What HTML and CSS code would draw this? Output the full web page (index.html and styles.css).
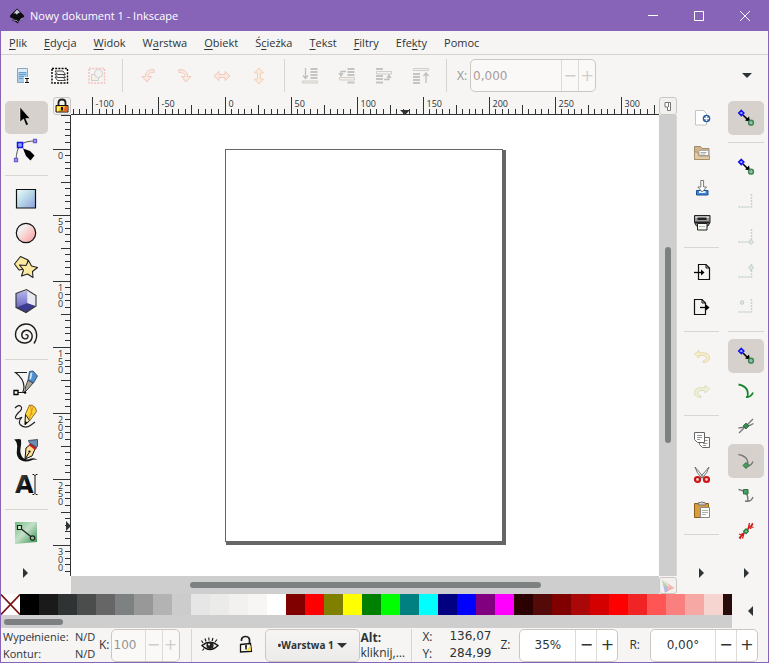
FILE: index.html
```html
<!DOCTYPE html>
<html lang="pl">
<head>
<meta charset="utf-8">
<title>Nowy dokument 1 - Inkscape</title>
<link rel="stylesheet" href="styles.css">
</head>
<body>
<svg class="defs" aria-hidden="true">
  <defs>
    <linearGradient id="gBlue" x1="0" y1="0" x2="1" y2="1"><stop offset="0" stop-color="#f4fafb"/><stop offset=".45" stop-color="#b9dbe8"/><stop offset="1" stop-color="#8f9ee0"/></linearGradient>
    <linearGradient id="gPink" x1="0" y1="0" x2="1" y2="1"><stop offset=".3" stop-color="#f0efed"/><stop offset=".5" stop-color="#fbd3d3"/><stop offset="1" stop-color="#f59a9a"/></linearGradient>
    <linearGradient id="gGreen" x1="0" y1="0" x2="1" y2="1"><stop offset="0" stop-color="#6fbf84"/><stop offset=".45" stop-color="#c4e0c8"/><stop offset="1" stop-color="#2f8f4a"/></linearGradient>
    <linearGradient id="gCube" x1="0" y1="0" x2="0" y2="1"><stop offset="0" stop-color="#b5b5ec"/><stop offset="1" stop-color="#6a6ac2"/></linearGradient>
    <linearGradient id="gInk" x1="0" y1="0" x2="1" y2="1"><stop offset="0" stop-color="#777"/><stop offset=".5" stop-color="#111"/><stop offset="1" stop-color="#000"/></linearGradient>
    <symbol id="snapNodes" viewBox="0 0 24 24">
      <path d="M9 9l5 5" stroke="#000" stroke-width="1.6"/><path d="M16 15.500l-5-1 4-4z" fill="#000"/>
      <path d="M7.300 4.500L9.800 7 7.300 9.500 4.800 7z" fill="#aab4ff" stroke="#1212f0" stroke-width="1.600"/>
      <circle cx="17" cy="16.700" r="2.400" fill="#9ab6d0" stroke="#3a8a44" stroke-width="1.500"/>
    </symbol>
  </defs>
</svg>
<div class="window">
  <header class="titlebar">
    <svg class="logo" viewBox="0 0 16 16"><path d="M8 0.500L15 7.500Q16 9 14 9.500L11.500 10.500 13 12 10 12.500 9 15.500 6 13.500 3 12.500 5 11 1.500 9.500Q0 8.500 1.500 7z" fill="#0c0c10"/><path d="M8 1.500l3 3-2 .8-1 1.400-1.500-1.500-2 .5z" fill="#c9cdd8"/><path d="M4 12l4 .5 1 1.500M11 11.800l3-.8" stroke="#8d93a2" fill="none"/></svg>
    <span class="title">Nowy dokument 1 - Inkscape</span>
    <button class="wbtn" aria-label="Minimalizuj"><svg viewBox="0 0 12 12"><path d="M1 5.500h10"/></svg></button>
    <button class="wbtn" aria-label="Maksymalizuj"><svg viewBox="0 0 12 12"><path d="M1.500 1.500h9v9h-9z"/></svg></button>
    <button class="wbtn" aria-label="Zamknij"><svg viewBox="0 0 12 12"><path d="M1 1l10 10M11 1L1 11"/></svg></button>
  </header>
  <nav class="menubar">
    <button><u>P</u>lik</button><button><u>E</u>dycja</button><button><u>W</u>idok</button><button>W<u>a</u>rstwa</button><button><u>O</u>biekt</button><button>Ś<u>c</u>ieżka</button><button><u>T</u>ekst</button><button><u>F</u>iltry</button><button>Efe<u>k</u>ty</button><button>Pomoc</button>
  </nav>
  <div class="toolbar">
    <button class="tb" aria-label="Zaznacz wszystko"><svg viewBox="0 0 24 24"><path d="M6.500 4.500h10v14h-10z" fill="#a9cdea" stroke="#8fa6b8"/><path d="M7 5h9v3H7z" fill="#d9ecfa"/><path d="M8 8.500h7M8 10.500h7M8 12.500h5M8 14.500h4" stroke="#6a9bc5"/><path d="M13 13h6v7h-6z" fill="#fff"/><path d="M14 14.500h4M14 18.500h4M16 14.500v4" stroke="#111"/></svg></button>
    <button class="tb" aria-label="Zaznacz na warstwach"><svg viewBox="0 0 24 24"><path d="M4 4.500h15.500v14.500H4z" fill="#fdfdfd" stroke="#000" stroke-width="1.400" stroke-dasharray="2 1.200"/><g fill="#f3f3f3" stroke="#333" stroke-width=".9"><path d="M7 13h8l2.500 3.500H9.500z"/><path d="M7 10h8l2.500 3.500H9.500z"/><path d="M7 7h8l2.500 3.500H9.500z"/></g></svg></button>
    <button class="tb off" aria-label="Odznacz"><svg viewBox="0 0 24 24"><path d="M4 4.500h15.500v14.500H4z" fill="none" stroke="#f0483c" stroke-width="1.400" stroke-dasharray="2 1.200"/><path d="M6.500 10.500h7v6h-7z" fill="#f8e9c0" stroke="#777"/><circle cx="13.500" cy="9.500" r="4" fill="#eee" stroke="#777"/></svg></button>
    <i class="vsep"></i>
    <button class="tb off orange red" aria-label="Obróć w lewo"><svg viewBox="0 0 24 24"><path d="M18 5.500C12 5.500 9.500 8 9.500 12.500H6l5 5.500 4.500-5.500H12C12 9.500 14 8.500 18 8.500z"/></svg></button>
    <button class="tb off orange red" aria-label="Obróć w prawo"><svg viewBox="0 0 24 24"><path d="M6 5.500c6 0 8.500 2.500 8.500 7H18l-5 5.500-4.500-5.500H12C12 9.500 10 8.500 6 8.500z"/></svg></button>
    <button class="tb off orange red" aria-label="Odbij poziomo"><svg viewBox="0 0 24 24"><path d="M4 12l5-4.500v3h6v-3l5 4.500-5 4.500v-3H9v3z"/></svg></button>
    <button class="tb off orange" aria-label="Odbij pionowo"><svg viewBox="0 0 24 24"><path d="M12 4l4.500 5h-3v6h3L12 20l-4.500-5h3V9h-3z"/></svg></button>
    <i class="vsep"></i>
    <button class="tb off" aria-label="Na spód"><svg viewBox="0 0 24 24"><path d="M12.500 5h7M12.500 8h7M12.500 11h7M12.500 14h7" stroke="#555" stroke-width="2"/><path d="M4.500 17h15v2h-15z" fill="#f6e8c0" stroke="#777"/><path d="M7.500 4v10M5 11.500l2.500 3 2.500-3" fill="none" stroke="#444" stroke-width="1.300"/></svg></button>
    <button class="tb off" aria-label="Niżej"><svg viewBox="0 0 24 24"><path d="M12.500 5h7M12.500 8h7M12.500 11h7M12.500 18.500h7" stroke="#555" stroke-width="2"/><path d="M4.500 13.500h15v2.500h-15z" fill="#f6e8c0" stroke="#777"/><path d="M11 7.500H6V11M4 9l2 3 2-3" fill="none" stroke="#444" stroke-width="1.300"/></svg></button>
    <button class="tb off" aria-label="Wyżej"><svg viewBox="0 0 24 24"><path d="M4 5h7M4 12h7M4 15h7M4 18.500h7" stroke="#555" stroke-width="2"/><path d="M4.500 7.500h15V10h-15z" fill="#eee" stroke="#777"/><path d="M12 15.500h5V12M15 14l2-3 2 3" fill="none" stroke="#444" stroke-width="1.300"/></svg></button>
    <button class="tb off" aria-label="Na wierzch"><svg viewBox="0 0 24 24"><path d="M4 10h7M4 13h7M4 16h7M4 19h7" stroke="#555" stroke-width="2"/><path d="M4.500 4.500h15v2h-15z" fill="#eee" stroke="#777"/><path d="M17 19V9M14.500 12L17 9l2.500 3" fill="none" stroke="#444" stroke-width="1.300"/></svg></button>
    <i class="vsep"></i>
    <label class="lbl dim" for="posx">X:</label>
    <div class="spin small off-spin wide"><input id="posx" value="0,000" disabled><button disabled aria-label="Mniej">−</button><button disabled aria-label="Więcej">+</button></div>
    <button class="more" aria-label="Więcej opcji"><i class="tri down"></i></button>
  </div>
  <main class="work">
    <aside class="toolbox">
      <button class="on" aria-label="Wskaźnik"><svg viewBox="0 0 26 26"><path d="M7 3v15l3.500-3L13 21.500l2.500-1-2.800-6H17z" fill="#000" stroke="#fff" stroke-width=".5"/></svg></button>
      <button aria-label="Edycja węzłów"><svg viewBox="0 0 26 26"><path d="M22 3Q12 3 7 7 3.500 12 3 22" fill="none" stroke="#555"/><path d="M1.500 20.500h3v3h-3zM20.500 1.500h3v3h-3z" fill="#b9b9ff" stroke="#6b5bd0" stroke-width="1.300"/><path d="M4.500 4.500h5v5h-5z" fill="#8fa0f8" stroke="#1616e6" stroke-width="1.500"/><path d="M10 10.500l7 2.500 4.500 4.500-4 5-4.500-4.500z" fill="#000"/></svg></button>
      <i class="hsep"></i>
      <button aria-label="Prostokąt"><svg viewBox="0 0 26 26"><path d="M3.500 3.500h19v18.500h-19z" fill="url(#gBlue)" stroke="#111" stroke-width="1.200"/></svg></button>
      <button aria-label="Elipsa"><svg viewBox="0 0 26 26"><circle cx="13" cy="13" r="9.700" fill="url(#gPink)" stroke="#111" stroke-width="1.200"/></svg></button>
      <button aria-label="Gwiazda"><svg viewBox="0 0 26 26"><g fill="#fbe9a0" stroke="#222" stroke-width="1.100" stroke-linejoin="round"><path d="M7.500 2.500L15 6l-1.500 8.500-7.500 1.500-4.500-6z"/><path d="M15.500 6.500L18.500 12l6 1.500-5 4 .5 6-5.500-3.500-6 2 2-6-4-5 6.500.5z"/></g></svg></button>
      <button aria-label="Obiekt 3D"><svg viewBox="0 0 26 26"><path d="M3 5.500L13.500 1.500 23 7.500V18l-10 6.500L3 19.500z" fill="#e6e6f2"/><path d="M3 5.500l11.500-3V16L3 19.500z" fill="url(#gCube)"/><path d="M3 19.500L14.500 15 23 18l-10 6.500z" fill="#3c3c8e"/><path d="M14.500 2.500L23 7.500V18l-8.500-3z" fill="#e8e8f0"/><path d="M3 5.500L13.500 1.500 23 7.500V18l-10 6.500L3 19.500z" fill="none" stroke="#333" stroke-width="1.100"/></svg></button>
      <button aria-label="Spirala"><svg viewBox="0 0 26 26"><path d="M12.500 13c1.500-1 3.200.5 2.300 2.300-1.500 2.700-6 1.700-6-2.300 0-4 4.700-6.200 8-3.500 4.200 3.500 2.500 10-3 11.200C7.500 22 2.500 18 2.500 12.500 2.500 6.500 7.500 2 13 2c6.500 0 11.500 5.500 10.500 13.500-.4 2.500-1.500 4.500-2.500 6" fill="none" stroke="#1c1c1c" stroke-width="1.400"/></svg></button>
      <i class="hsep"></i>
      <button aria-label="Pióro"><svg viewBox="0 0 26 26"><path d="M14 2.500H2.500Q11 9 11 17q0 3-1.500 5.500M5 22.500h8" fill="none" stroke="#222" stroke-width="1.200"/><path d="M1 20.500h4v4H1z" fill="#fff" stroke="#000" stroke-width="1.300"/><circle cx="12" cy="22.500" r="1.300"/><path d="M15 10l5 3-4.500 5.500L12 22l.5-5z" fill="#a8a596" stroke="#222" stroke-width=".8"/><path d="M16.500 1.500l3.500-.5 4.500 5-4 7-5.500-3z" fill="#4f8fd0" stroke="#23415f" stroke-width=".8"/><path d="M17.500 3l2-.5-1.500 7-1.500-.5z" fill="#cfe6fb"/></svg></button>
      <button aria-label="Ołówek"><svg viewBox="0 0 26 26"><path d="M2 4q4-4 6-1.500t-2.500 6Q1 13.500 3 14.500t5-1" fill="none" stroke="#222" stroke-width="1.200"/><path d="M9 13q-4 4-2 7.500 5 5 11 .5l4-3" fill="none" stroke="#222" stroke-width="1.200"/><path d="M16.500 1q6 0 7 6.500l-7 9.500-4.500 4 .5-11z" fill="#fbd63a" stroke="#6d4a10" stroke-width=".8"/><path d="M17.500 2l1.500 9M20 3l-4 12" stroke="#e89a12" stroke-width="1.200"/><path d="M12.500 10.500l4 6-4.500 4z" fill="#fbeec0" stroke="#222"/><path d="M12.300 17l2 1.500L12 21z"/></svg></button>
      <button aria-label="Kaligrafia"><svg viewBox="0 0 26 26"><path d="M1 1.500q5-1 7 0 .5 4-.5 9t2.500 9.500q3.500 2.500 8 .5 4-1 6.500 1.500-3.500-1-6.500.5-5 2-9.500 0Q2.500 20 4 11 5 4 1 1.500z" fill="#111"/><path d="M13 10l5-4 4 5-3 7-7 3z" fill="#fbdf98" stroke="#111"/><path d="M12.500 20.500l3.500-6" stroke="#111"/><circle cx="16.500" cy="13.500" r="1.100"/><path d="M15.500 7l3-3 5.500 6-2 2z" fill="#d42020"/><path d="M15.500 2.500l9-1V8l-1 1.500-7-4.500z" fill="#6b8fb0" stroke="#25384a" stroke-width=".8"/></svg></button>
      <button aria-label="Tekst"><svg viewBox="0 0 26 26"><text x="2" y="21" class="a-glyph" fill="url(#gInk)">A</text><path d="M19.500 2.500h1.500l1 1 1-1H24.500M22 3v18.500M19.500 22.500H21l1-1 1 1h1.500" fill="none" stroke="#111"/></svg></button>
      <i class="hsep"></i>
      <button aria-label="Gradient"><svg viewBox="0 0 26 26"><path d="M2 2h22v20L2 24z" fill="url(#gGreen)"/><path d="M6.500 7.500L19 17.500" stroke="#222" stroke-width="1.200"/><path d="M4.500 5.500h4v4h-4z" fill="#cfe8d2" stroke="#222" stroke-width="1.200"/><circle cx="19.500" cy="18" r="2.200" fill="#8fc79b" stroke="#222" stroke-width="1.200"/></svg></button>
      <button class="expand" aria-label="Więcej narzędzi"><i class="tri right"></i></button>
    </aside>
    <section class="view">
      <button class="corner" aria-label="Zablokuj prowadnice"><svg viewBox="0 0 16 16"><path d="M4.500 8V4.500q0-3 3.500-3t3.500 3V8" fill="none" stroke="#222" stroke-width="1.800"/><path d="M2 7.500h12v6.500H2z" fill="#f2b616" stroke="#111"/><path d="M3 8.500h4L4 13.500H3z" fill="#fff27a"/><path d="M11.500 8h2v5.500H9z" fill="#e8622a"/><path d="M8 9v3.500" stroke="#111" stroke-width="2"/></svg></button>
      <div class="ruler" id="hruler"></div>
      <button class="corner" aria-label="Powiększ przy zmianie rozmiaru"><svg viewBox="0 0 16 16"><path d="M5 4.500h5.500v8H7.500V9H5z" fill="#fff" stroke="#777"/><path d="M8.500 5v4" stroke="#777"/></svg></button>
      <div class="ruler" id="vruler"></div>
      <div class="canvas"><div class="sheet"></div></div>
      <div class="track vert"><i class="thumb"></i></div>
      <span class="gutter"></span>
      <div class="track horiz"><i class="thumb"></i></div>
      <button class="corner" aria-label="Zarządzanie kolorem"><svg viewBox="0 0 16 16"><path d="M2 1.500L14.500 10 5 14.500z" fill="#f3b3ae"/><path d="M2 1.500l4 2.700 1 5L3.500 8z" fill="#a9d8b2"/><path d="M3.500 8l4 1.500L8 13l-3 1.500z" fill="#aebde8"/><path d="M2 1.500l7 7" stroke="#fff"/></svg></button>
    </section>
    <aside class="rail commands">
      <button aria-label="Nowy"><svg viewBox="0 0 24 24"><path d="M5.500 4.500h8l3 3v11.500h-11z" fill="#fff" stroke="#c4c4c4"/><circle cx="16.500" cy="12.500" r="3.800" fill="#2c5fa0"/><path d="M16.500 10v5M14 12.500h5" stroke="#fff" stroke-width="1.500"/></svg></button>
      <button aria-label="Otwórz"><svg viewBox="0 0 24 24"><path d="M4.500 5.500h6l1.500 2h7v11h-14.500z" fill="#d2b48c" stroke="#a08a68"/><path d="M9 9.500h9.500v5H9z" fill="#fff" stroke="#aaa"/><path d="M10.500 11.500h6M10.500 13h5" stroke="#888" stroke-width=".7"/><path d="M4.500 18.500V11h3l1.500 4h10.500v3.500z" fill="#e2cba6" stroke="#a08a68" stroke-width=".8"/></svg></button>
      <button aria-label="Zapisz"><svg viewBox="0 0 24 24"><path d="M6.500 14.500h11.500v4.500H6.500z" fill="#3d86d8" stroke="#1c4f96"/><path d="M9 15h6.500v2H9z" fill="#e8f1fb"/><path d="M10.800 4.500h2.800V11h3l-4.400 5-4.400-5h3z" fill="#fff" stroke="#777"/></svg></button>
      <button aria-label="Drukuj"><svg viewBox="0 0 24 24"><path d="M4.500 4.500h15.500v7l-2 3.500H6.500l-2-3.500z" fill="#999" stroke="#222"/><path d="M5.500 5.500h13.500v1.500H5.500z" fill="#ddd"/><path d="M7.500 6.500h9v2.500h-9z" fill="#222"/><path d="M5 10.500h14.500v2H5z" fill="#222"/><path d="M7.500 12.500h9.500v6.500H7.500z" fill="#f6fbf2" stroke="#222"/><path d="M9 15.500h6" stroke="#bbb"/></svg></button>
      <i class="hsep"></i>
      <button aria-label="Importuj"><svg viewBox="0 0 24 24"><path d="M8.500 4.500h7.500l3.500 3.500v11.500h-11z" fill="#f4f4f2" stroke="#111" stroke-width="1.200"/><path d="M16 4.500V8h3.500" fill="none" stroke="#111"/><path d="M4 12.500h8" stroke="#000" stroke-width="1.300"/><path d="M11 9.500l3.500 3-3.500 3z"/></svg></button>
      <button aria-label="Eksportuj"><svg viewBox="0 0 24 24"><path d="M4.500 4.500h7.500l3.500 3.500v11.500h-11z" fill="#f4f4f2" stroke="#111" stroke-width="1.200"/><path d="M12 4.500V8h3.500" fill="none" stroke="#111"/><path d="M10 12.500h7" stroke="#000" stroke-width="1.300"/><path d="M16 9.500l3.500 3-3.500 3z"/></svg></button>
      <i class="hsep"></i>
      <button class="off" aria-label="Cofnij"><svg viewBox="0 0 24 24"><path d="M9 6.500L4.500 10 9 14v-2.500h4q3.500 0 3.500 2.500t-3.500 3v1.500q6 0 6.500-4.500 0-5-6-5.200H9z" fill="#f6e06a" stroke="#b99c22"/></svg></button>
      <button class="off" aria-label="Ponów"><svg viewBox="0 0 24 24"><path d="M15 6.500l4.500 3.500L15 14v-2.500h-4q-3.500 0-3.500 2.500t3.500 3v1.500q-6 0-6.500-4.500 0-5 6-5.200H15z" fill="#e4f08a" stroke="#8fae4a"/></svg></button>
      <i class="hsep"></i>
      <button aria-label="Kopiuj"><svg viewBox="0 0 24 24"><g fill="#fff" stroke="#666"><path d="M9.500 9.500h10v10h-7l-3-3z"/><path d="M4.500 4.500h10v10h-7l-3-3z"/></g><path d="M7 7.500h5M7 9.500h5M7 11.500h3M15 12.500h2.500M13 15.500h4.500M13 17.500h3" stroke="#888" stroke-width=".9"/></svg></button>
      <button aria-label="Wytnij"><svg viewBox="0 0 24 24"><path d="M5 4l8.500 10-2 1Q6 9 5 4zM19 4l-8.500 10 2 1Q18 9 19 4z" fill="#eee" stroke="#666" stroke-width=".9"/><g fill="#f5d0d0" stroke="#cc1414" stroke-width="2.200"><circle cx="7.500" cy="16.500" r="2.500"/><circle cx="16.500" cy="16.500" r="2.500"/></g></svg></button>
      <button aria-label="Wklej"><svg viewBox="0 0 24 24"><path d="M4.500 5.500h14v14h-14z" fill="#d99d3c" stroke="#8a5c16"/><path d="M8 7h8l-1-2.500h-2q-1-1.500-2.500 0h-2z" fill="#ccc" stroke="#777"/><path d="M10.500 9.500h9v10h-9z" fill="#fff" stroke="#888"/><path d="M12 12.500h6M12 14.500h6M12 16.500h4" stroke="#999" stroke-width=".8"/></svg></button>
      <i class="hsep"></i>
      <button class="expand" aria-label="Więcej poleceń"><i class="tri right"></i></button>
    </aside>
    <aside class="rail snap">
      <button class="on" aria-label="Przyciąganie"><svg viewBox="0 0 24 24"><use href="#snapNodes"/></svg></button>
      <i class="hsep"></i>
      <button aria-label="Przyciągaj obwiednie"><svg viewBox="0 0 24 24"><use href="#snapNodes"/></svg></button>
      <button class="off" aria-label="Krawędzie obwiedni"><svg viewBox="0 0 24 24"><path d="M17.500 4v13H4" class="dots"/></svg></button>
      <button class="off" aria-label="Narożniki obwiedni"><svg viewBox="0 0 24 24"><path d="M17.500 4v13H4" class="dots"/><path d="M17 14.500l2.500 2.500-2.500 2.500-2.500-2.500z" class="node"/></svg></button>
      <button class="off" aria-label="Środki krawędzi"><svg viewBox="0 0 24 24"><path d="M17.500 4v13H4" class="dots"/><path d="M17 5l2.500 2.500-2.500 3-2.500-3z" class="node"/></svg></button>
      <button class="off" aria-label="Środki obwiedni"><svg viewBox="0 0 24 24"><path d="M17.500 4v13H4" class="dots"/><circle cx="8" cy="7.500" r="1.800" class="node"/></svg></button>
      <i class="hsep"></i>
      <button class="on" aria-label="Przyciągaj węzły"><svg viewBox="0 0 24 24"><use href="#snapNodes"/></svg></button>
      <button aria-label="Przyciągaj do ścieżek"><svg viewBox="0 0 24 24"><path d="M4.500 5.500q11 2 9 12.500M12 18q5 .5 7-4.500" fill="none" stroke="#14862a" stroke-width="1.800"/></svg></button>
      <button aria-label="Przecięcia ścieżek"><svg viewBox="0 0 24 24"><path d="M5 19L19 5M4.500 14q9-1 15-4.500" fill="none" stroke="#777" stroke-width="1.300"/><path d="M12 9l3 3-3 3-3-3z" fill="#2f8f50" stroke="#1c5c34" stroke-width=".7"/></svg></button>
      <button class="on" aria-label="Węzły ostre"><svg viewBox="0 0 24 24"><path d="M4.500 5.500q11 2 9 11.500M12 17q5 .5 7-4.500" fill="none" stroke="#777" stroke-width="1.400"/><path d="M12 13.500l3 3-3 3-3-3z" fill="#4aa060" stroke="#2a6f3e"/></svg></button>
      <button aria-label="Węzły gładkie"><svg viewBox="0 0 24 24"><path d="M4.500 5.500q11 2 9 12M11 17q6 1.500 8-4" fill="none" stroke="#777" stroke-width="1.400"/><path d="M9.500 5.500h4.500V10H9.500z" fill="#4aa060" stroke="#2a6f3e"/></svg></button>
      <button aria-label="Środki odcinków"><svg viewBox="0 0 24 24"><path d="M5 19L19 5" stroke="#555" stroke-width="1.200"/><path d="M6 20l2.500-6M8.500 19.500l1.500-6M5 15l5 2M14 10.500L15.500 4M16.500 10L18.500 4M14.500 6.500l5 2" stroke="#e01818" stroke-width="1.300"/><path d="M12 10l2.300 2.300-2.300 2.300-2.300-2.300z" fill="#8fc99c" stroke="#1f7a38" stroke-width="1.300"/></svg></button>
      <button class="expand" aria-label="Więcej przyciągania"><i class="tri right"></i></button>
    </aside>
  </main>
  <div class="palette">
    <div class="pal-area">
      <div class="swatches" id="swatches"><button class="none" aria-label="Brak"><svg viewBox="0 0 19 21"><path d="M0 0.500l19 20M19 0.500L0 20.500"/></svg></button></div>
      <div class="pal-track"><i class="thumb"></i></div>
    </div>
    <button class="pal-menu" aria-label="Menu palety"><i class="tri left"></i></button>
  </div>
  <footer class="status">
    <dl class="fillstroke"><dt>Wypełnienie:</dt><dd>N/D</dd><dt>Kontur:</dt><dd>N/D</dd></dl>
    <label class="lbl" for="opacity">K:</label>
    <div class="spin small off-spin opac"><input id="opacity" value="100" disabled><button disabled aria-label="Mniej">−</button><button disabled aria-label="Więcej">+</button></div>
    <i class="vsep"></i>
    <button class="tb" aria-label="Widoczność warstwy"><svg viewBox="0 0 24 24"><path d="M4 12.500q8-6.500 16 0-8 8-16 0z" fill="#eee" stroke="#111" stroke-width="1.400"/><circle cx="12" cy="12.500" r="3.600" fill="#222"/><circle cx="11" cy="11.500" r="1" fill="#fff"/><path d="M5 10L3.500 7.500M8 8.500L7 5.500M11 7.500L10.800 4.500M14 8l1-3M17 9l2-2.500M6 15.500l-1.500 2" stroke="#111" stroke-width="1.100"/></svg></button>
    <button class="tb" aria-label="Blokada warstwy"><svg viewBox="0 0 24 24"><path d="M7.500 8V6.500q.5-3 4-3t4 3V11" fill="none" stroke="#222" stroke-width="1.700"/><path d="M6.500 11.500l10-1 1 8-11 .5z" fill="#fafaf4" stroke="#111" stroke-width="1.300"/><path d="M12 18l4.500-6 .5 6z" fill="#f2dc5c"/><path d="M11 13h2M12 12.500v4" stroke="#111" stroke-width="1.500"/></svg></button>
    <div class="layer"><select aria-label="Bieżąca warstwa"><option>•Warstwa 1</option></select><i class="tri down"></i></div>
    <p class="hint"><b>Alt:</b><br>kliknij,…</p>
    <i class="vsep"></i>
    <dl class="coords"><dt>X:</dt><dd>136,07</dd><dt>Y:</dt><dd>284,99</dd></dl>
    <label class="lbl" for="zoom">Z:</label>
    <div class="spin zoom"><input id="zoom" value="35%"><button aria-label="Pomniejsz">−</button><button aria-label="Powiększ">+</button></div>
    <label class="lbl" for="rot">R:</label>
    <div class="spin rot"><input id="rot" value="0,00°"><button aria-label="Obróć w lewo">−</button><button aria-label="Obróć w prawo">+</button></div>
  </footer>
</div>
<script src="script.js"></script>
</body>
</html>
```
FILE: styles.css
```css
* { box-sizing: border-box; }
body { margin: 0; font: 11px/16px "Open Sans", "Noto Sans", sans-serif; color: #2e3436; }
button { border: 0; background: none; padding: 0; margin: 0; font: inherit; color: inherit; }
svg { display: block; }
.defs { position: absolute; width: 0; height: 0; }
.window { display: flex; flex-direction: column; height: 100vh; border: 1px solid #8764b8; border-top: 0; background: #f6f5f4; overflow: hidden; }

.titlebar { flex: none; display: flex; align-items: center; height: 31px; padding-left: 8px; background: #8764b8; color: #fff; }
.logo { width: 16px; height: 16px; margin-right: 5px; }
.title { flex: 1; }
.wbtn { display: grid; place-items: center; width: 46px; height: 31px; }
.wbtn svg { width: 12px; height: 12px; fill: none; stroke: #fff; }

.menubar { flex: none; display: flex; gap: 1px; height: 24px; border-bottom: 1px solid #d6d2ce; }
.menubar button { padding: 0 8px; }
.menubar u { text-underline-offset: 2px; }

.toolbar { flex: none; display: flex; align-items: center; height: 41px; padding-left: 3px; }
.tb { flex: none; display: grid; place-items: center; width: 37px; height: 33px; }
.tb svg { width: 24px; height: 24px; }
.off svg { opacity: .3; }
.orange svg { fill: #fbd9b8; stroke: #ee7b28; stroke-width: 1; }
.red svg { fill: #fcd2b4; stroke: #f0603a; }
.vsep { flex: none; width: 1px; height: 33px; margin: 0 6px 0 7px; background: #d8d4d0; }
.lbl { flex: none; font-size: 12px; }
.toolbar .lbl { padding: 0 3px 0 4px; }
.dim { color: #929595; }
.more { width: 42px; height: 33px; margin-left: auto; display: grid; place-items: center; }

.tri { display: block; width: 0; height: 0; border: 5px solid transparent; }
.tri.down { border-top-color: #2e3436; border-bottom-width: 0; }
.tri.right { border-left-color: #2e3436; border-right-width: 0; }
.tri.left { border-right-color: #2e3436; border-left-width: 0; }

.spin { flex: none; display: flex; height: 33px; border: 1px solid #cdc7c2; border-radius: 5px; background: #fff; overflow: hidden; }
.spin input { flex: 1; min-width: 0; width: 0; border: 0; padding: 0 2px; background: none; font: 12px "DejaVu Sans", sans-serif; color: #2e3436; }
.spin button { flex: none; width: 21px; border-left: 1px solid #dedad7; font: 16px/30px "DejaVu Sans", sans-serif; }
.spin.small button { width: 17px; }
.off-spin { background: #faf9f8; }
.off-spin input { color: #929595; }
.off-spin button { color: #d0cecc; }
.wide { width: 126px; }
.wide input { color: #a99b9b; }

.work { flex: 1; min-height: 0; display: flex; }
.toolbox, .rail { flex: none; display: flex; flex-direction: column; gap: 1px; padding: 5px 4px 4px; }
.toolbox { width: 52px; }
.toolbox button, .rail button { flex: none; display: grid; place-items: center; border-radius: 5px; }
.toolbox button { width: 43px; height: 33px; padding: 0 2px 1px 0; }
.toolbox svg { width: 26px; height: 26px; }
.a-glyph { font: bold 24px "DejaVu Sans", sans-serif; }
.rail button { height: 34px; }
.rail svg { width: 24px; height: 24px; }
.commands { width: 47px; padding: 5px 5px 4px 7px; }
.snap { width: 44px; }
.on { background: #d6d1cd; }
.hsep { flex: none; height: 13px; background: linear-gradient(#d8d4d0, #d8d4d0) center / 100% 1px no-repeat; }
.toolbox .hsep { width: 43px; }
.toolbox button.expand, .rail button.expand { margin-top: auto; }
.dots { fill: none; stroke: #5a8a68; stroke-width: 1.5; stroke-dasharray: 2 1; }
.node { fill: #a8c8ae; stroke: #3f7f50; }

.view { flex: 1; min-width: 0; display: grid; grid-template: 19px minmax(0, 1fr) 18px / 18px minmax(0, 1fr) 18px; }
.ruler { overflow: hidden; }
.ruler text { font: 9px "Open Sans", sans-serif; fill: #2e3436; }
.ruler line { stroke: #2e3436; shape-rendering: crispEdges; }
.ruler path { fill: #2e3436; }
.corner { display: grid; place-items: center; margin: 1px 0 0; border: 1px solid #cdc7c2; border-radius: 3px; background: #f3f1f0; }
.corner svg { width: 16px; height: 16px; }
.canvas { position: relative; background: #fff; overflow: hidden; }
.sheet { position: absolute; left: 154px; top: 34px; width: 278px; height: 393px; border: 1px solid #666; background: #fff; box-shadow: 2px 2px 0 1px #666; clip-path: inset(0 -3px -3px 0); }
.track { background: #cecece; display: flex; }
.vert { justify-content: center; padding-top: 132px; border-right: 1px solid #d8d8d8; }
.thumb { display: block; border-radius: 3px; background: #7e8182; }
.vert .thumb { width: 6px; height: 196px; }
.horiz { align-items: center; padding-left: 119px; }
.horiz .thumb { width: 351px; height: 6px; }

.palette { flex: none; display: flex; height: 34px; }
.pal-area { flex: 1; min-width: 0; }
.swatches { display: flex; height: 21px; overflow: hidden; }
.swatches button { flex: none; width: 19px; height: 21px; }
.none { background: #fff; }
.none path { stroke: #7c1010; stroke-width: 1.6; }
.pal-track { height: 13px; padding: 4px 3px; background: #cecece; }
.pal-track .thumb { width: 59px; height: 6px; }
.pal-menu { width: 36px; display: grid; place-items: center; }

.status { flex: none; display: flex; align-items: center; height: 34px; padding: 0 10px 0 2px; }
dl, p { margin: 0; }
dd { margin: 0; }
.fillstroke { flex: none; display: grid; grid-template-columns: 72px 24px; line-height: 17px; }
.opac { width: 69px; margin-left: 1px; }
.status .vsep { margin: 0 0 0 11px; }
.status .tb { width: 36px; }
.layer { flex: none; position: relative; width: 95px; height: 33px; margin-left: 1px; }
.layer select { appearance: none; width: 100%; height: 33px; padding: 0 12px; border: 1px solid #cdc7c2; border-radius: 5px; background: linear-gradient(#f6f5f4, #edebe9); font: bold 10px "Open Sans", sans-serif; color: #2e3436; }
.layer .tri { position: absolute; right: 13px; top: 14px; pointer-events: none; }
.hint { flex: 1; min-width: 0; padding-left: 1px; font-size: 12px; line-height: 15px; white-space: nowrap; overflow: hidden; }
.status .hint + .vsep { margin: 0 10px 0 0; }
.coords { flex: none; display: grid; grid-template-columns: 20px 49px; line-height: 17px; font-size: 12px; }
.coords dd { text-align: right; font-family: "DejaVu Sans", sans-serif; }
.coords + .lbl { margin-left: 9px; }
.zoom { width: 99px; margin: 0 11px 0 9px; }
.rot { width: 108px; margin-left: 10px; }
.zoom input, .rot input { text-align: center; }
```
FILE: script.js
```js
// Rulers: a tick every 5 units, a longer one every 25, a label every 50.
const SCALE = 1.3205;

function ticks(origin, length, draw) {
  const first = Math.ceil(-origin / SCALE / 5) * 5;
  let out = '';
  for (let u = first; origin + u * SCALE < length; u += 5) {
    const pos = Math.floor(origin + u * SCALE) + 0.5;
    out += draw(pos, u, u % 50 === 0 ? 17 : u % 25 === 0 ? 9 : 5);
  }
  return out;
}

function horizontal(length, origin, marker) {
  const body = ticks(origin, length, (x, u, len) =>
    `<line x1="${x}" y1="${18 - len}" x2="${x}" y2="18"/>` +
    (len === 17 ? `<text x="${x + 3}" y="11">${u}</text>` : ''));
  return `<svg width="${length}" height="19">${body}<line x1="0" y1="18.5" x2="${length}" y2="18.5"/><path d="M${marker - 5} 14h10l-5 5z"/></svg>`;
}

function vertical(length, origin, marker) {
  const body = ticks(origin, length, (y, u, len) =>
    `<line x1="${17 - len}" y1="${y}" x2="17" y2="${y}"/>` +
    (len === 17 ? [...String(u)].map((c, i) => `<text x="5" y="${y + 9 + i * 8}">${c}</text>`).join('') : ''));
  return `<svg width="18" height="${length}">${body}<line x1="17.5" y1="0" x2="17.5" y2="${length}"/><path d="M13 ${marker - 5}v10l5-5z"/></svg>`;
}

const hruler = document.getElementById('hruler');
const vruler = document.getElementById('vruler');
function drawRulers() {
  hruler.innerHTML = '';
  vruler.innerHTML = '';
  hruler.innerHTML = horizontal(hruler.clientWidth, 154, 334);
  vruler.innerHTML = vertical(vruler.clientHeight, 34, 411);
}
drawRulers();
window.addEventListener('resize', drawRulers);

const colors = ['#000000', '#1a1a1a', '#303333', '#4b4d4c', '#666666', '#7e8182', '#989898', '#b3b3b3', '#cccccc',
  '#e6e6e6', '#ebebea', '#f2f1f0', '#f7f6f4', '#ffffff', '#800000', '#ff0000', '#808000', '#ffff00', '#008000',
  '#00ff00', '#008080', '#00ffff', '#000080', '#0000ff', '#800080', '#ff00ff', '#2b0000', '#550a0a', '#800000',
  '#aa0808', '#d40000', '#ff0000', '#f02424', '#ff5555', '#fa8080', '#f5a8a4', '#f6d4d0', '#280b0b'];
const row = document.getElementById('swatches');
for (const color of colors) {
  const b = document.createElement('button');
  b.style.background = color;
  b.setAttribute('aria-label', color);
  row.append(b);
}
```
